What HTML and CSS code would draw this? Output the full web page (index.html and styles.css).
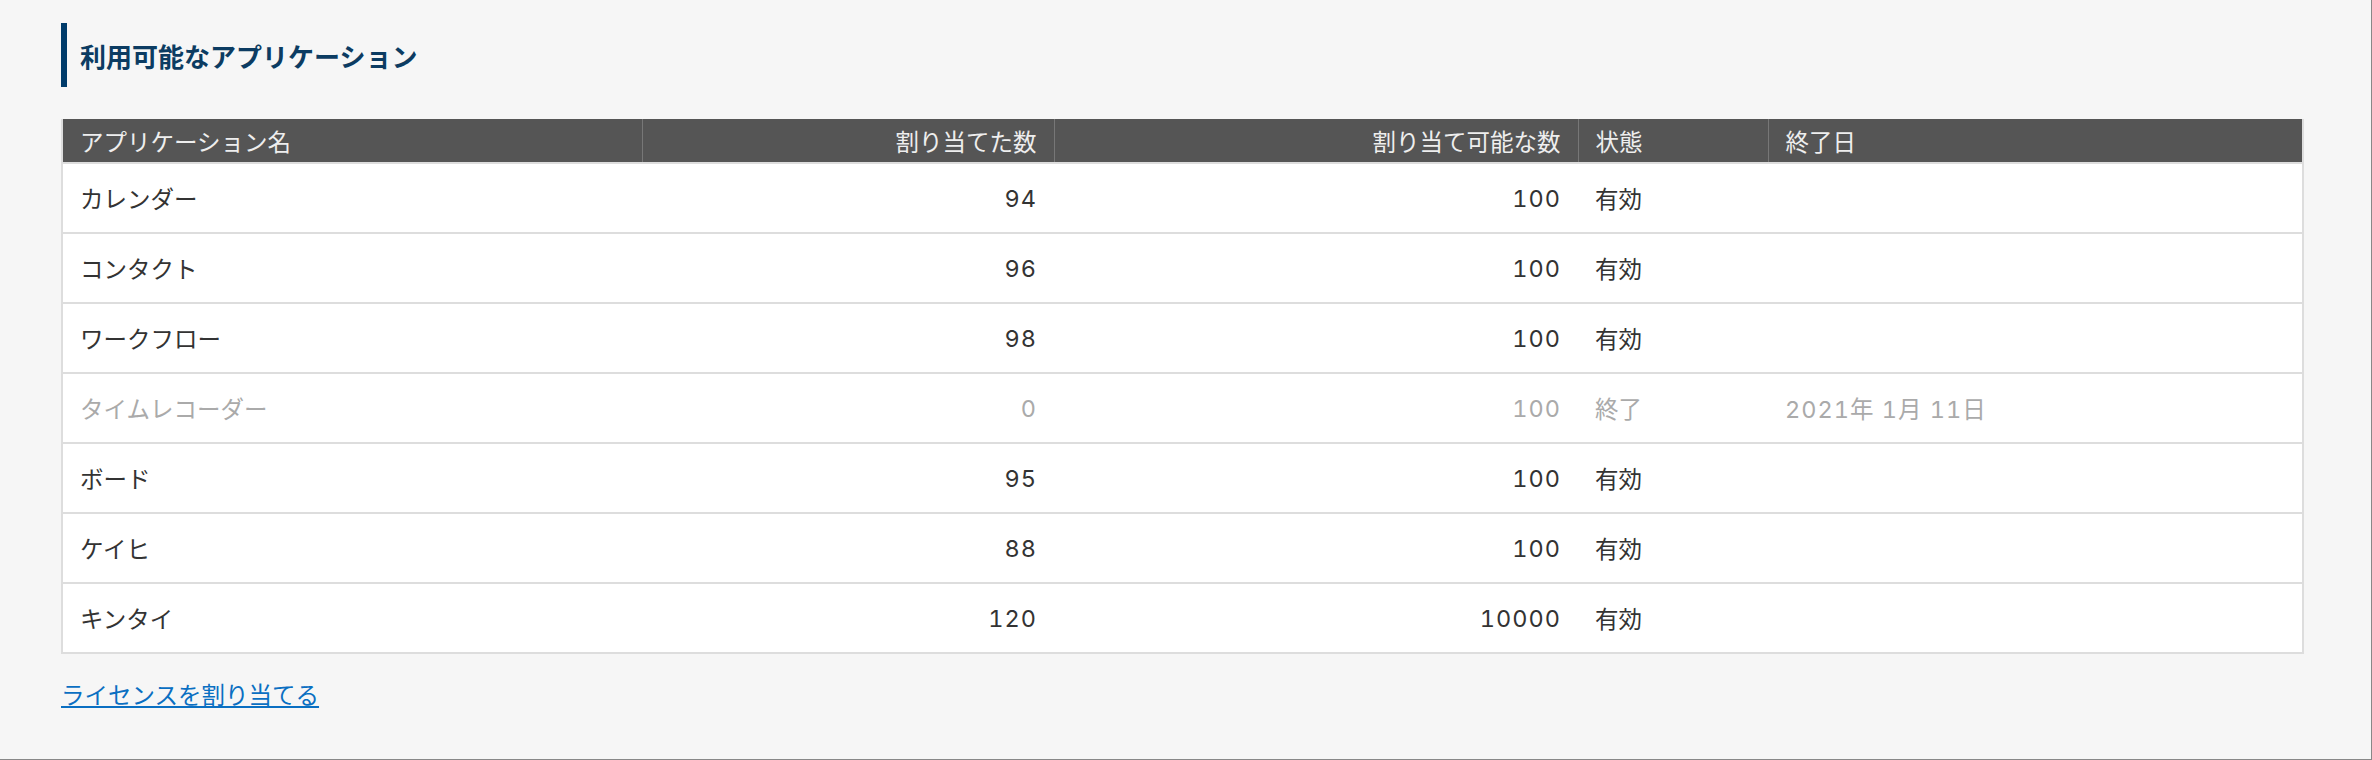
FILE: index.html
```html
<!DOCTYPE html>
<html lang="ja">
<head>
  <meta charset="UTF-8" />
  <meta name="viewport" content="width=device-width, initial-scale=1.0" />
  <title>利用可能なアプリケーション</title>
  <link rel="stylesheet" href="styles.css">
</head>
<body>
  <div class="page">
    <h2 class="section-title">利用可能なアプリケーション</h2>

    <table class="apps">
      <colgroup>
        <col class="col-name">
        <col class="col-used">
        <col class="col-max">
        <col class="col-state">
        <col>
      </colgroup>
      <thead>
        <tr>
          <th>アプリケーション名</th>
          <th class="num">割り当てた数</th>
          <th class="num">割り当て可能な数</th>
          <th>状態</th>
          <th>終了日</th>
        </tr>
      </thead>
      <tbody>
        <tr>
          <td>カレンダー</td>
          <td class="num">94</td>
          <td class="num">100</td>
          <td>有効</td>
          <td></td>
        </tr>
        <tr>
          <td>コンタクト</td>
          <td class="num">96</td>
          <td class="num">100</td>
          <td>有効</td>
          <td></td>
        </tr>
        <tr>
          <td>ワークフロー</td>
          <td class="num">98</td>
          <td class="num">100</td>
          <td>有効</td>
          <td></td>
        </tr>
        <tr class="ended">
          <td>タイムレコーダー</td>
          <td class="num">0</td>
          <td class="num">100</td>
          <td>終了</td>
          <td class="date">2021年 1月 11日</td>
        </tr>
        <tr>
          <td>ボード</td>
          <td class="num">95</td>
          <td class="num">100</td>
          <td>有効</td>
          <td></td>
        </tr>
        <tr>
          <td>ケイヒ</td>
          <td class="num">88</td>
          <td class="num">100</td>
          <td>有効</td>
          <td></td>
        </tr>
        <tr>
          <td>キンタイ</td>
          <td class="num">120</td>
          <td class="num">10000</td>
          <td>有効</td>
          <td></td>
        </tr>
      </tbody>
    </table>

    <a class="assign-link" href="#">ライセンスを割り当てる</a>
  </div>
</body>
</html>
```

FILE: styles.css
```css
html,
body {
  margin: 0;
  height: 100%;
}

body {
  background: #f6f6f6;
  color: #333;
  font-family: Inter, "Noto Sans CJK JP", sans-serif;
  font-size: 23.5px;
}

.page {
  box-sizing: border-box;
  min-height: 100vh;
  padding: 23px 67px 0 61px;
  border-right: 1px solid #888;
  border-bottom: 1px solid #888;
}

.section-title {
  margin: 0;
  height: 64px;
  display: flex;
  align-items: center;
  padding-left: 13px;
  border-left: 6px solid #003b6a;
  font-size: 26px;
  font-weight: bold;
  color: #0c3c62;
}

.apps {
  margin-top: 32px;
  width: 100%;
  table-layout: fixed;
  border-collapse: collapse;
  border-left: 2px solid #ddd;
  border-right: 2px solid #ddd;
  border-bottom: 2px solid #ddd;
  background: #fff;
}

.col-name {
  width: 580px;
}

.col-used {
  width: 412px;
}

.col-max {
  width: 524px;
}

.col-state {
  width: 190px;
}

.apps th {
  height: 43px;
  padding: 0 17px;
  background: #555;
  color: #eee;
  font-weight: normal;
  text-align: left;
  border-left: 1px solid #777;
  border-bottom: 2px solid #ddd;
  white-space: nowrap;
}

.apps th:first-child {
  border-left: none;
}

.apps td {
  height: 68px;
  padding: 0 17px;
  border-bottom: 2px solid #ddd;
  white-space: nowrap;
}

.apps .num {
  text-align: right;
}

.apps td.num,
.apps td.date {
  font-variant-numeric: tabular-nums;
  letter-spacing: 1px;
}

.apps tr.ended td {
  color: #aaa;
}

.assign-link {
  display: inline-block;
  margin-top: 25px;
  color: #0a6fc2;
  line-height: 34px;
}
```
